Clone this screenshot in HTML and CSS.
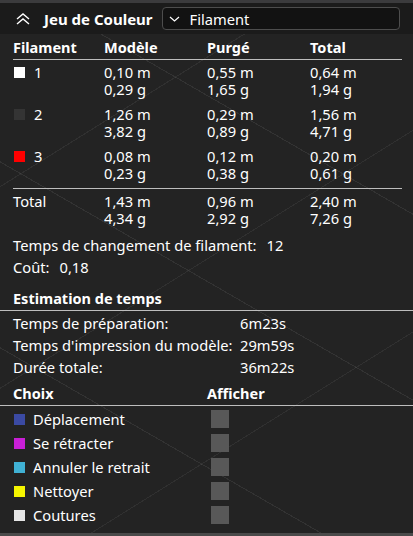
FILE: index.html
```html
<!DOCTYPE html>
<html lang="fr">
<head>
    <meta charset="UTF-8">
    <meta name="viewport" content="width=device-width, initial-scale=1.0">
    <title>Jeu de Couleur</title>
    <link rel="stylesheet" href="styles.css">
</head>
<body>
    <div class="panel">
        <!-- Barre de titre avec le sélecteur -->
        <div class="title-bar">
            <svg class="collapse-icon" width="16" height="12" viewBox="0 0 16 12">
                <path d="M2 6 L8 1 L14 6 M2 11 L8 6 L14 11" fill="none" stroke="#ffffff" stroke-width="1.4"/>
            </svg>
            <span class="title">Jeu de Couleur</span>
            <div class="select">
                <svg width="11" height="6" viewBox="0 0 11 6">
                    <path d="M1 1 L5.5 5 L10 1" fill="none" stroke="#ffffff" stroke-width="1.2"/>
                </svg>
                <span>Filament</span>
            </div>
        </div>

        <!-- Tableau des filaments -->
        <div class="grid head">
            <span>Filament</span>
            <span>Modèle</span>
            <span>Purgé</span>
            <span>Total</span>
        </div>

        <div class="rows">
            <div class="grid row">
                <span class="fil"><i class="swatch white"></i>1</span>
                <span>0,10 m<br>0,29 g</span>
                <span>0,55 m<br>1,65 g</span>
                <span>0,64 m<br>1,94 g</span>
            </div>
            <div class="grid row">
                <span class="fil"><i class="swatch dark"></i>2</span>
                <span>1,26 m<br>3,82 g</span>
                <span>0,29 m<br>0,89 g</span>
                <span>1,56 m<br>4,71 g</span>
            </div>
            <div class="grid row">
                <span class="fil"><i class="swatch red"></i>3</span>
                <span>0,08 m<br>0,23 g</span>
                <span>0,12 m<br>0,38 g</span>
                <span>0,20 m<br>0,61 g</span>
            </div>
        </div>

        <div class="grid row total">
            <span>Total</span>
            <span>1,43 m<br>4,34 g</span>
            <span>0,96 m<br>2,92 g</span>
            <span>2,40 m<br>7,26 g</span>
        </div>

        <div class="info">
            <p>Temps de changement de filament:<span class="val">12</span></p>
            <p>Coût:<span class="val">0,18</span></p>
        </div>

        <!-- Estimation de temps -->
        <h3 class="section">Estimation de temps</h3>
        <div class="times">
            <span>Temps de préparation:</span><span>6m23s</span>
            <span>Temps d'impression du modèle:</span><span>29m59s</span>
            <span>Durée totale:</span><span>36m22s</span>
        </div>

        <!-- Légende -->
        <div class="section legend-head">
            <span>Choix</span>
            <span>Afficher</span>
        </div>
        <ul class="legend">
            <li><i class="swatch travel"></i><span>Déplacement</span><b class="check"></b></li>
            <li><i class="swatch retract"></i><span>Se rétracter</span><b class="check"></b></li>
            <li><i class="swatch unretract"></i><span>Annuler le retrait</span><b class="check"></b></li>
            <li><i class="swatch wipe"></i><span>Nettoyer</span><b class="check"></b></li>
            <li><i class="swatch seams"></i><span>Coutures</span><b class="check"></b></li>
        </ul>
    </div>
</body>
</html>
```

FILE: styles.css
```css
/* Estilos generales */
* {
    margin: 0;
    padding: 0;
    box-sizing: border-box;
}

body {
    font-family: "Noto Sans", sans-serif;
    font-size: 14.7px;
    color: #ffffff;
    background-color: #232323;
    width: 413px;
    height: 536px;
    overflow: hidden;
}

/* Panneau avec la grille du plateau en fond */
.panel {
    height: 536px;
    border-top: 3px solid #3b3b3d;
    border-bottom: 3px solid #4a4a4a;
    background-color: #232323;
    background-image:
        repeating-linear-gradient(30deg, transparent 0 160px, rgba(255, 255, 255, 0.07) 160px 161px),
        repeating-linear-gradient(-32deg, transparent 0 170px, rgba(255, 255, 255, 0.06) 170px 171px);
}

/* Barre de titre */
.title-bar {
    display: flex;
    align-items: center;
    height: 31px;
    padding-left: 15px;
    background-color: #1b1b1b;
}

.collapse-icon {
    margin-right: 13px;
}

.title {
    font-weight: bold;
    font-size: 15px;
    margin-right: 9px;
}

.select {
    display: flex;
    align-items: center;
    gap: 10px;
    width: 238px;
    height: 23px;
    padding-left: 6px;
    border: 1px solid #4d4d4d;
    border-radius: 4px;
    background-color: #121212;
}

/* Tableau */
.grid {
    display: grid;
    grid-template-columns: 91px 103px 103px 1fr;
    margin: 0 11px 0 13px;
}

.head {
    font-weight: bold;
    font-size: 14.5px;
    line-height: 20px;
    padding: 3px 0 2px;
    border-bottom: 1px solid #bdbdbd;
}

.rows {
    padding: 4px 0 6px;
    margin: 0 11px 0 13px;
    border-bottom: 1px solid #bdbdbd;
}

.row {
    line-height: 17px;
}

.rows .row {
    margin: 0 0 8px;
}

.rows .row:last-child {
    margin-bottom: 0;
}

.total {
    padding-top: 4px;
}

.fil {
    display: flex;
    align-items: flex-start;
    gap: 9px;
}

.swatch {
    display: inline-block;
    width: 11px;
    height: 11px;
    margin-top: 3px;
    margin-left: 1px;
}

.white { background-color: #ffffff; }
.dark { background-color: #343434; }
.red { background-color: #ff0000; }

/* Infos */
.info {
    padding: 7px 13px 0;
    line-height: 22px;
}

.val {
    margin-left: 10px;
}

.section {
    font-size: 14.5px;
    font-weight: bold;
    line-height: 20px;
    padding: 10px 13px 2px;
    border-bottom: 1px solid #bdbdbd;
}

.times {
    display: grid;
    grid-template-columns: 227px 1fr;
    padding: 1px 13px 0;
    line-height: 22px;
}

/* Légende */
.legend-head {
    display: grid;
    grid-template-columns: 194px 1fr;
    padding-top: 5px;
}

.legend {
    list-style: none;
    padding-top: 1px;
}

.legend li {
    display: grid;
    grid-template-columns: 19px 178px 18px;
    align-items: center;
    height: 24px;
    padding-left: 14px;
}

.legend .swatch {
    margin: 0;
}

.check {
    width: 18px;
    height: 18px;
    background-color: #585858;
}

.travel { background-color: #3b4aa3; }
.retract { background-color: #c81fd6; }
.unretract { background-color: #40b1d4; }
.wipe { background-color: #f5f500; }
.seams { background-color: #e6e6e6; }
```
